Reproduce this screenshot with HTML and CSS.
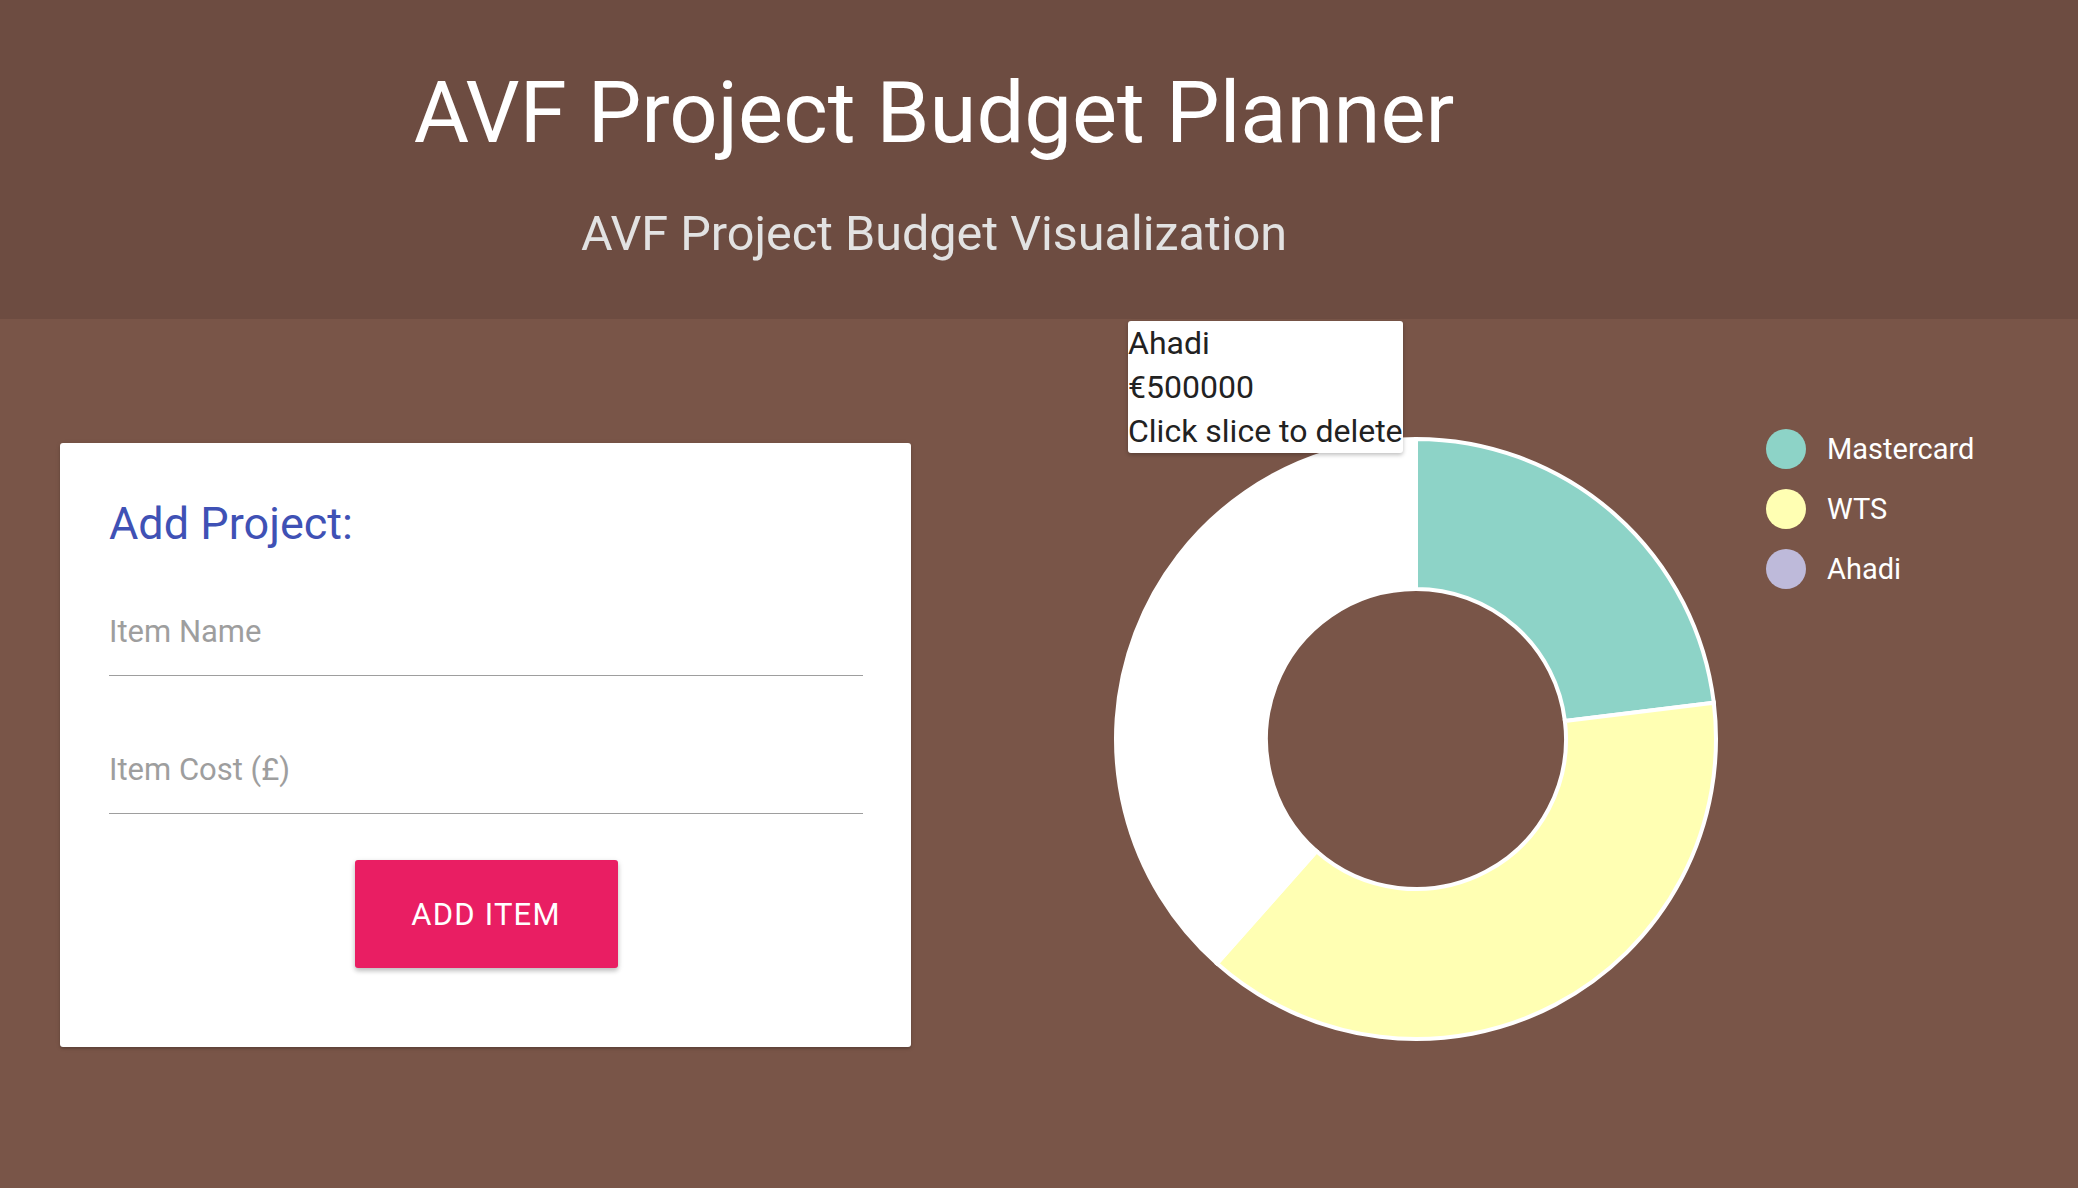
FILE: index.html
```html
<!DOCTYPE html>
<html lang="en">
<head>
<meta charset="utf-8">
<title>AVF Project Budget Planner</title>
<link rel="stylesheet" href="styles.css">
</head>
<body>
<header class="header">
  <h1 class="title">AVF Project Budget Planner</h1>
  <h3 class="subtitle">AVF Project Budget Visualization</h3>
</header>
<main class="main">
  <section class="card">
    <h4 class="card-title">Add Project:</h4>
    <div class="field"><input class="input" type="text" placeholder="Item Name"></div>
    <div class="field"><input class="input" type="number" placeholder="Item Cost (£)"></div>
    <div class="actions"><button class="btn">ADD ITEM</button></div>
  </section>
  <svg class="chart" width="620" height="620" viewBox="0 0 620 620">
    <path class="slice" fill="#8dd3c7" d="M310,10 A300,300 0 0 1 607.81,273.85 L458.91,291.92 A150,150 0 0 0 310,160 Z"/>
    <path class="slice" fill="#ffffb3" d="M607.81,273.85 A300,300 0 0 1 111.02,534.51 L210.51,422.26 A150,150 0 0 0 458.91,291.92 Z"/>
    <path class="slice" fill="#ffffff" d="M111.02,534.51 A300,300 0 0 1 310,10 L310,160 A150,150 0 0 0 210.51,422.26 Z"/>
  </svg>
  <ul class="legend">
    <li class="legend-item"><span class="dot dot-teal"></span>Mastercard</li>
    <li class="legend-item"><span class="dot dot-yellow"></span>WTS</li>
    <li class="legend-item"><span class="dot dot-lavender"></span>Ahadi</li>
  </ul>
  <div class="tooltip">
    <div class="tip-line">Ahadi</div>
    <div class="tip-line">€500000</div>
    <div class="tip-line">Click slice to delete</div>
  </div>
</main>
</body>
</html>
```
FILE: styles.css
```css
* { box-sizing: border-box; }
html, body {
  margin: 0;
  padding: 0;
  background: #795548;
  font-family: Roboto, "Liberation Sans", sans-serif;
}
.header {
  background: #6d4c41;
  height: 319px;
  padding: 63px 210px 0 0;
  text-align: center;
}
.title {
  margin: 0;
  font-size: 85px;
  line-height: 100px;
  font-weight: 400;
  color: #ffffff;
}
.subtitle {
  margin: 41px 0 0;
  font-size: 48.5px;
  line-height: 60px;
  font-weight: 400;
  color: #e2e2e2;
}
.main {
  position: relative;
  display: flex;
  align-items: flex-start;
  height: 869px;
}
.card {
  margin: 124px 0 0 60px;
  width: 851px;
  height: 604px;
  background: #fff;
  border-radius: 3px;
  padding: 52px 48px 0 49px;
  box-shadow: 0 2px 2px rgba(0,0,0,0.14), 0 1px 5px rgba(0,0,0,0.12);
}
.card-title {
  margin: 0;
  font-size: 45px;
  line-height: 58px;
  font-weight: 400;
  color: #3f51b5;
}
.field {
  margin-top: 57px;
}
.field + .field {
  margin-top: 72px;
}
.input {
  display: block;
  width: 100%;
  height: 66px;
  padding: 0 0 22px;
  border: none;
  border-bottom: 1px solid #9e9e9e;
  outline: none;
  background: transparent;
  font-family: Roboto, "Liberation Sans", sans-serif;
  font-size: 31px;
  line-height: 44px;
  color: #333;
}
.input::placeholder { color: #9e9e9e; }
.actions {
  margin-top: 46px;
  display: flex;
  justify-content: center;
}
.btn {
  width: 263px;
  height: 108px;
  border: none;
  border-radius: 3px;
  background: #e91e63;
  color: #fff;
  font-family: Roboto, "Liberation Sans", sans-serif;
  font-size: 31px;
  letter-spacing: 1.2px;
  box-shadow: 0 3px 4px rgba(0,0,0,0.16), 0 2px 6px rgba(0,0,0,0.14);
}
.chart {
  margin: 110px 0 0 195px;
  flex: none;
}
.slice {
  stroke: #fff;
  stroke-width: 4;
}
.legend {
  list-style: none;
  margin: 100px 0 0 40px;
  padding: 0;
}
.legend-item {
  display: flex;
  align-items: center;
  height: 60px;
  font-size: 29px;
  color: #fff;
}
.dot {
  width: 40px;
  height: 40px;
  border-radius: 50%;
  margin-right: 21px;
}
.dot-teal { background: #8dd3c7; }
.dot-yellow { background: #ffffb3; }
.dot-lavender { background: #bebada; }
.tooltip {
  position: absolute;
  left: 1128px;
  top: 2px;
  background: #fff;
  border-radius: 3px;
  box-shadow: 0 2px 4px rgba(0,0,0,0.25);
  font-size: 32px;
  line-height: 44px;
  color: #222;
  white-space: nowrap;
}
```
